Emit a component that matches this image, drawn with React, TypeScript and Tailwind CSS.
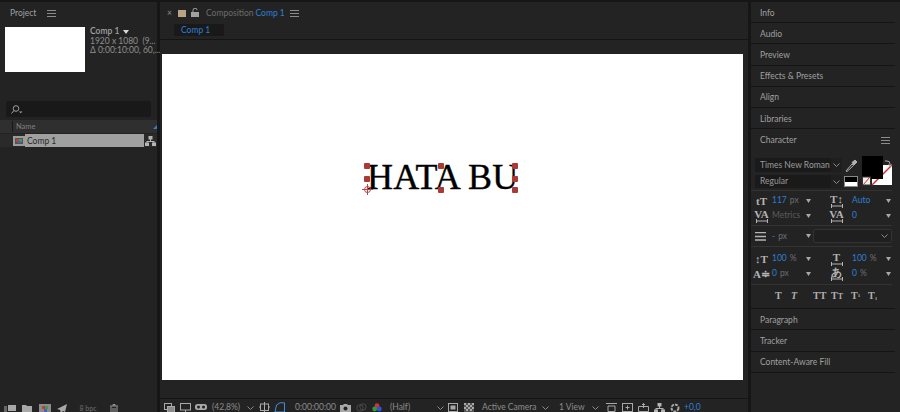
import type { ReactNode } from "react";

const ui = "font-['Lato','Liberation_Sans',sans-serif]";

function Burger({ className = "" }: { className?: string }) {
  return (
    <svg width="9" height="7" viewBox="0 0 9 7" className={className}>
      <path d="M0 .5h9M0 3.5h9M0 6.5h9" stroke="#8c8c8c" strokeWidth="1" />
    </svg>
  );
}

function Chevron({ className = "" }: { className?: string }) {
  return (
    <svg width="7" height="4" viewBox="0 0 7 4" className={className}>
      <path d="M.5.5 3.5 3.5 6.5.5" stroke="#8a8a8a" fill="none" strokeWidth="1" />
    </svg>
  );
}

function Caret() {
  return (
    <svg width="5" height="4" viewBox="0 0 5 4">
      <path d="M0 0h5L2.5 4z" fill="#a8a8a8" />
    </svg>
  );
}

function Tree() {
  return (
    <svg width="11" height="10" viewBox="0 0 11 10" fill="#b4b4b4">
      <rect x="3.5" y="0" width="4" height="3.5" />
      <rect x="0" y="6.5" width="4" height="3.5" />
      <rect x="7" y="6.5" width="4" height="3.5" />
      <path d="M5 3h1v2h3.5v2h-1V6h-6v1h-1V5H5z" />
    </svg>
  );
}

function Handle({ className }: { className: string }) {
  return <span className={`absolute h-[6px] w-[6px] rounded-[1px] bg-[#a93a3a] ${className}`} />;
}

function DockRow({ label }: { label: string }) {
  return (
    <div className="flex h-[21.2px] items-center border-b border-[#141414] pl-[9px] pt-[2px] text-[8.5px] text-[#a0a0a0]">
      <span>{label}</span>
    </div>
  );
}

function Value({ blue, unit, dim }: { blue?: string; unit?: string; dim?: string }) {
  return (
    <span className="flex items-center gap-[3px] text-[8.5px] leading-none">
      {blue && <span className="text-[#2d7fd3]">{blue}</span>}
      {dim && <span className="text-[#5c5c5c]">{dim}</span>}
      {unit && <span className="text-[#6e6e6e]">{unit}</span>}
    </span>
  );
}

function Glyph({ children, arrows }: { children: ReactNode; arrows?: "under" }) {
  return (
    <span className="flex h-[14px] w-[13px] flex-col items-center justify-center font-['Liberation_Serif',serif] text-[11px] font-bold leading-[10px] text-[#b4b4b4]">
      <span className="whitespace-nowrap">{children}</span>
      {arrows === "under" && (
        <svg width="12" height="4" viewBox="0 0 12 4" fill="none" stroke="#b4b4b4">
          <path d="M.5 0v4M11.500 0v4M0 2h12" />
        </svg>
      )}
    </span>
  );
}

function MetricRow({
  leftIcon,
  left,
  rightIcon,
  right,
  className = "",
}: {
  leftIcon: ReactNode;
  left: ReactNode;
  rightIcon: ReactNode;
  right: ReactNode;
  className?: string;
}) {
  return (
    <div className={`flex h-[15px] items-center pl-[4px] ${className}`}>
      <span className="w-[17px]">{leftIcon}</span>
      <span className="w-[34px]">{left}</span>
      <Caret />
      <span className="ml-[19px] w-[22px]">{rightIcon}</span>
      <span className="w-[34px]">{right}</span>
      <Caret />
    </div>
  );
}

function FootIcon({ children, w = 16 }: { children: ReactNode; w?: number }) {
  return (
    <span className="flex h-[13px] shrink-0 items-center justify-center" style={{ width: w }}>
      {children}
    </span>
  );
}

function ProjectPanel() {
  return (
    <aside className="flex w-[157px] shrink-0 flex-col bg-[#232323]">
      <div className="flex h-[21px] items-center gap-[11px] pl-[10px] pt-[2px] text-[8.5px] text-[#a0a0a0]">
        <span>Project</span>
        <Burger />
      </div>
      <div className="flex gap-[5px] pl-[5px] pt-[4px]">
        <div className="h-[45px] w-[80px] shrink-0 bg-white" />
        <div className="flex flex-col text-[8.5px] leading-[9.5px] text-[#8f8f8f]">
          <span className="flex items-center gap-[4px] font-semibold text-[#a3a3a3]">
            Comp 1
            <svg width="6" height="4" viewBox="0 0 6 4">
              <path d="M0 0h6L3 4z" fill="#d8d8d8" />
            </svg>
          </span>
          <span className="whitespace-nowrap">1920 x 1080 &nbsp;(9...</span>
          <span className="whitespace-nowrap">Δ 0:00:10:00, 60,...</span>
        </div>
      </div>
      <div className="mx-[6px] mt-[29px] flex h-[16px] items-center rounded-[2px] bg-[#191919] pl-[5px]">
        <svg width="12" height="9" viewBox="0 0 12 9" fill="none" stroke="#a0a0a0">
          <circle cx="5" cy="3.5" r="2.8" />
          <path d="M3 5.5.5 8.5" />
          <path d="M8 6.5h3.5L9.7 8.2z" fill="#a0a0a0" stroke="none" />
        </svg>
      </div>
      <div className="mt-[3px] flex h-[13px] items-center justify-between bg-[#2f2f2f] pl-[12px] text-[7.5px] text-[#808080]">
        <span className="border-l border-[#181818] pl-[3px]">Name</span>
        <svg width="4" height="4" viewBox="0 0 4 4">
          <path d="M4 0v4H0z" fill="#2d7fd3" />
        </svg>
      </div>
      <div className="mt-[1px] flex h-[13px] items-center bg-[#2a2a2a] pl-[13px]">
        <svg width="12" height="10" viewBox="0 0 12 10">
          <rect width="12" height="10" fill="#9b9b9b" />
          <rect x="2" y="2" width="8" height="6" fill="#555" />
          <rect x="3" y="3" width="3" height="3" fill="#c23c3c" />
          <rect x="6" y="3" width="3" height="3" fill="#3f9a4a" />
          <rect x="5" y="5" width="3" height="2" fill="#3d66c4" />
        </svg>
        <span className="flex h-[13px] w-[119px] items-center bg-[#a0a0a0] pl-[2px] pt-[1px] text-[8.5px] text-[#2a2a2a]">Comp 1</span>
        <span className="ml-[1px] flex w-[11px] items-center justify-center">
          <Tree />
        </span>
      </div>
      <div className="flex-1" />
      <div className="flex h-[10px] items-start overflow-hidden pl-[4px] text-[7px] text-[#6f6f6f]">
        <FootIcon w={12}>
          <svg width="12" height="8" viewBox="0 0 12 8">
            <rect x="4" y="0" width="8" height="6" fill="#a8a8a8" />
            <path d="M0 2h3M0 4h3M0 6h3" stroke="#a8a8a8" />
          </svg>
        </FootIcon>
        <span className="w-[6px]" />
        <FootIcon w={10}>
          <svg width="10" height="9" viewBox="0 0 10 9">
            <path d="M0 1h4l1 1h5v7H0z" fill="#a8a8a8" />
          </svg>
        </FootIcon>
        <span className="w-[7px]" />
        <FootIcon w={12}>
          <svg width="12" height="9" viewBox="0 0 12 9">
            <rect width="12" height="9" fill="#8c8c8c" />
            <rect x="3" y="2" width="3" height="3" fill="#c23c3c" />
            <rect x="6" y="2" width="3" height="3" fill="#3f9a4a" />
            <rect x="5" y="5" width="3" height="3" fill="#3d66c4" />
          </svg>
        </FootIcon>
        <span className="w-[6px]" />
        <FootIcon w={10}>
          <svg width="10" height="9" viewBox="0 0 10 9">
            <path d="M10 0 0 5l3 1 1 3 2-2 2 1z" fill="#a8a8a8" />
          </svg>
        </FootIcon>
        <span className="ml-[13px] flex w-[16px] justify-center whitespace-nowrap leading-[13px]">8 bpc</span>
        <span className="w-[14px]" />
        <FootIcon w={8}>
          <svg width="8" height="10" viewBox="0 0 8 10" fill="none" stroke="#9a9a9a">
            <path d="M0 2h8M3 2V.5h2V2M1 2.5v7h6v-7M3 4v4M5 4v4" />
          </svg>
        </FootIcon>
      </div>
    </aside>
  );
}

function CompFooter() {
  return (
    <footer className="flex h-[14px] items-center overflow-hidden border-t border-[#141414] pl-[1px] pt-[4px] text-[8.5px] text-[#8c8c8c]">
      <FootIcon>
        <svg width="11" height="10" viewBox="0 0 11 10" fill="none" stroke="#a8a8a8">
          <rect x=".5" y=".5" width="7" height="6" />
          <rect x="3.5" y="3.5" width="7" height="6" fill="#8c8c8c" />
        </svg>
      </FootIcon>
      <FootIcon>
        <svg width="11" height="10" viewBox="0 0 11 10" fill="none" stroke="#a8a8a8">
          <rect x=".5" y=".5" width="10" height="6.5" />
          <path d="M3 9.5h5M5.5 7v2" />
        </svg>
      </FootIcon>
      <FootIcon>
        <svg width="12" height="9" viewBox="0 0 12 9">
          <rect y="1" width="12" height="6" rx="2.5" fill="#a8a8a8" />
          <circle cx="3.5" cy="4" r="1.5" fill="#232323" />
          <circle cx="8.5" cy="4" r="1.5" fill="#232323" />
        </svg>
      </FootIcon>
      <span className="ml-[3px] w-[34px] shrink-0 whitespace-nowrap">(42,8%)</span>
      <Chevron className="ml-[1px] shrink-0" />
      <span className="w-[2px] shrink-0" />
      <FootIcon>
        <svg width="11" height="11" viewBox="0 0 11 11" fill="none" stroke="#a8a8a8">
          <rect x="1.5" y="2" width="8" height="6.5" />
          <path d="M5.5 0v11M0 5h1.5M9.5 5H11" />
        </svg>
      </FootIcon>
      <FootIcon>
        <svg width="12" height="11" viewBox="0 0 12 11" fill="none" stroke="#3f8fe0">
          <path d="M1 10 2.5 3 6 .8h4.5V10z" />
        </svg>
      </FootIcon>
      <span className="ml-[7px] w-[42px] shrink-0 whitespace-nowrap">0:00:00:00</span>
      <FootIcon>
        <svg width="11" height="8" viewBox="0 0 11 8">
          <path d="M0 1h3l1-1h3l1 1h3v7H0z" fill="#a8a8a8" />
          <circle cx="5.5" cy="4.5" r="2" fill="#232323" />
        </svg>
      </FootIcon>
      <FootIcon>
        <svg width="11" height="9" viewBox="0 0 11 9" fill="none" stroke="#4a4a4a">
          <circle cx="4" cy="5" r="3.2" />
          <circle cx="7" cy="4" r="3.2" />
        </svg>
      </FootIcon>
      <FootIcon>
        <svg width="10" height="10" viewBox="0 0 10 10">
          <circle cx="5" cy="2.6" r="2.4" fill="#d03333" />
          <circle cx="2.7" cy="6" r="2.4" fill="#2e9b3e" />
          <circle cx="7.3" cy="6" r="2.4" fill="#2f55d4" />
        </svg>
      </FootIcon>
      <span className="ml-[5px] w-[44px] shrink-0 whitespace-nowrap">(Half)</span>
      <Chevron className="ml-[3px] shrink-0" />
      <span className="w-[1px] shrink-0" />
      <FootIcon>
        <svg width="10" height="9" viewBox="0 0 10 9" fill="none" stroke="#a8a8a8">
          <rect x=".5" y=".5" width="9" height="8" />
          <rect x="2.5" y="2.5" width="5" height="4" fill="#a8a8a8" stroke="none" />
        </svg>
      </FootIcon>
      <FootIcon>
        <svg width="10" height="9" viewBox="0 0 10 9">
          <rect width="10" height="9" fill="#555" />
          <path d="M0 0h2v2H0zM4 0h2v2H4zM8 0h2v2H8zM2 2h2v2H2zM6 2h2v2H6zM0 4h2v2H0zM4 4h2v2H4zM8 4h2v2H8zM2 6h2v2H2zM6 6h2v2H6z" fill="#aaa" />
        </svg>
      </FootIcon>
      <span className="ml-[5px] w-[57px] shrink-0 whitespace-nowrap">Active Camera</span>
      <Chevron className="ml-[3px] shrink-0" />
      <span className="ml-[10px] w-[30px] shrink-0 whitespace-nowrap">1 View</span>
      <Chevron className="ml-[3px] shrink-0" />
      <span className="w-[4px] shrink-0" />
      <FootIcon>
        <svg width="11" height="9" viewBox="0 0 11 9" fill="none" stroke="#a8a8a8">
          <path d="M0 .5h11M2 3h7v5.5H2z" />
        </svg>
      </FootIcon>
      <FootIcon>
        <svg width="11" height="10" viewBox="0 0 11 10" fill="none" stroke="#a8a8a8">
          <rect x=".5" y=".5" width="10" height="8" />
          <path d="M5.5 2.5v4M3.5 4.500h4" />
        </svg>
      </FootIcon>
      <FootIcon>
        <svg width="11" height="9" viewBox="0 0 11 9" fill="none" stroke="#a8a8a8">
          <path d="M.5 3.5h10v5H.5zM5.5 5V.5M4 2l1.500-1.500L7 2" />
        </svg>
      </FootIcon>
      <FootIcon>
        <Tree />
      </FootIcon>
      <FootIcon>
        <svg width="10" height="10" viewBox="0 0 10 10" fill="none" stroke="#a8a8a8" strokeWidth="2">
          <circle cx="5" cy="5" r="3.5" strokeDasharray="3 1" />
        </svg>
      </FootIcon>
      <span className="ml-[1px] whitespace-nowrap text-[#2d7fd3]">+0,0</span>
    </footer>
  );
}

function CompPanel() {
  return (
    <main className="flex w-[588px] shrink-0 flex-col bg-[#232323]">
      <div className="flex h-[22px] items-center pl-[7px] pt-[1px] text-[8.5px]">
        <span className="w-[11px] text-[#8a8a8a]">×</span>
        <span className="h-[7px] w-[8px] bg-[#b8a384]" />
        <svg width="8" height="9" viewBox="0 0 8 9" className="mb-[3px] ml-[5px]">
          <path d="M2 4V2.200a2 2 0 0 1 4 0" fill="none" stroke="#a0a0a0" />
          <rect y="4" width="8" height="5" fill="#a0a0a0" />
        </svg>
        <span className="ml-[7px] text-[#6d6d6d]">Composition</span>
        <span className="ml-[2px] text-[#2d7fd3]">Comp 1</span>
        <Burger className="ml-[5px]" />
      </div>
      <div className="flex h-[16px] items-start border-b border-[#141414] pl-[14px]">
        <span className="flex h-[12px] w-[50px] items-center rounded-[1px] bg-[#191919] pl-[7px] text-[8.5px] text-[#2d7fd3]">Comp 1</span>
      </div>
      <div className="flex flex-1 items-start pl-[2px] pt-[14px]">
        <div className="relative h-[326px] w-[581px] bg-white">
          <div className="absolute left-[205px] top-[109px] h-[30px] w-[150px] whitespace-nowrap font-['Liberation_Serif',serif] text-[36px] leading-[28px] tracking-[0.2px] text-black [-webkit-text-stroke:0.4px_black]">
            HATA BU
            <Handle className="left-[-3px] top-0" />
            <Handle className="left-[-3px] top-[13px]" />
            <Handle className="left-[71px] top-0" />
            <Handle className="left-[71px] top-[24px]" />
            <Handle className="left-[145px] top-0" />
            <Handle className="left-[145px] top-[13px]" />
            <Handle className="left-[145px] top-[24px]" />
            <svg width="11" height="11" viewBox="0 0 11 11" fill="none" stroke="#b5484c" className="absolute left-[-5px] top-[21px]">
              <circle cx="5.5" cy="5.5" r="3" />
              <path d="M5.5 0v11M0 5.5h11" />
            </svg>
          </div>
        </div>
      </div>
      <CompFooter />
    </main>
  );
}

function CharacterPanel() {
  return (
    <section className="border-b border-[#141414] pr-[3px]">
      <div className="flex h-[22px] items-center justify-between pl-[9px] pt-[1px] text-[8.5px] text-[#a0a0a0]">
        <span>Character</span>
        <Burger className="mr-[2px]" />
      </div>
      <div className="relative flex h-[37px] flex-col gap-[3px] pl-[4px] pt-[7px] text-[8.5px] text-[#9a9a9a]">
        <div className="flex h-[14px] items-center">
          <span className="flex h-[14px] w-[76px] items-center whitespace-nowrap bg-[#1a1a1a] pl-[5px]">Times New Roman</span>
          <span className="flex h-[14px] w-[11px] items-center justify-center bg-[#1f1f1f]">
            <Chevron />
          </span>
          <svg width="12" height="13" viewBox="0 0 12 13" fill="none" stroke="#b0b0b0" className="ml-[3px]">
            <path d="M1 12 7 5l1.500 1.500L2 12.500z" />
            <path d="M7 3.500 10 1l2 2-3 3z" fill="#b0b0b0" />
          </svg>
        </div>
        <div className="flex h-[13px] items-center">
          <span className="flex h-[13px] w-[76px] items-center bg-[#1a1a1a] pl-[5px]">Regular</span>
          <span className="flex h-[13px] w-[11px] items-center justify-center bg-[#1f1f1f]">
            <Chevron />
          </span>
          <span className="ml-[2px] flex h-[11px] w-[14px] flex-col border border-[#888]">
            <span className="h-1/2 bg-black" />
            <span className="h-1/2 bg-white" />
          </span>
        </div>
        <svg width="31" height="31" viewBox="0 0 31 31" className="absolute left-[111px] top-[5px]">
          <rect x="10" y="9" width="20" height="20" fill="#fff" />
          <path d="M10 29 30 9" stroke="#d92a2a" strokeWidth="1.5" />
          <rect x="0" y="0" width="21" height="23" fill="#000" />
          <path d="M23 5h2a3 3 0 0 1 3 3v2M26.500 8.500 28 10.500 29.500 8.500" stroke="#b0b0b0" fill="none" />
          <rect x="0.500" y="21" width="8" height="8" fill="#eee" stroke="#333" />
          <path d="M1 29 8 21" stroke="#d92a2a" />
        </svg>
      </div>
      <div className="mt-[2px] border-t border-[#333] pt-[1px]">
        <MetricRow
          className="mt-[1px]"
          leftIcon={<Glyph>tT</Glyph>}
          left={<Value blue="117" unit="px" />}
          rightIcon={<Glyph arrows="under">T↕</Glyph>}
          right={<Value blue="Auto" />}
        />
        <MetricRow
          leftIcon={<Glyph arrows="under">VA</Glyph>}
          left={<Value dim="Metrics" />}
          rightIcon={<Glyph arrows="under">VA</Glyph>}
          right={<Value blue="0" />}
        />
      </div>
      <div className="mt-[2px] flex h-[21px] items-center border-t border-[#333] pl-[4px]">
        <svg width="11" height="9" viewBox="0 0 11 9">
          <path d="M0 .5h11M0 4.500h11M0 8h11" stroke="#b4b4b4" strokeWidth="1.500" />
        </svg>
        <span className="ml-[6px] w-[34px]">
          <Value blue="-" unit="px" />
        </span>
        <Caret />
        <span className="ml-[2px] flex h-[14px] flex-1 items-center justify-end rounded-[2px] border border-[#333] bg-[#1f1f1f] pr-[3px]">
          <Chevron />
        </span>
      </div>
      <div className="border-t border-[#333] pt-[3px]">
        <MetricRow
          className="mt-[1px]"
          leftIcon={<Glyph>↕T</Glyph>}
          left={<Value blue="100" unit="%" />}
          rightIcon={<Glyph arrows="under">T</Glyph>}
          right={<Value blue="100" unit="%" />}
        />
        <MetricRow
          leftIcon={<Glyph>A≑</Glyph>}
          left={<Value blue="0" unit="px" />}
          rightIcon={<Glyph arrows="under">あ</Glyph>}
          right={<Value blue="0" unit="%" />}
        />
      </div>
      <div className="mt-[3px] flex h-[24px] items-center border-t border-[#333] pb-[2px] pl-[24px] font-['Liberation_Serif',serif] text-[10px] font-bold text-[#b0b0b0]">
        <span className="w-[16px]">T</span>
        <span className="w-[22px] italic">T</span>
        <span className="w-[18px]">TT</span>
        <span className="w-[20px]">
          T<span className="text-[8px]">T</span>
        </span>
        <span className="w-[17px]">
          T<sup className="text-[5px]">1</sup>
        </span>
        <span>
          T<sub className="text-[5px]">1</sub>
        </span>
      </div>
    </section>
  );
}

export default function App() {
  return (
    <div className={`flex h-[412px] w-[900px] gap-[3px] overflow-hidden bg-[#161616] pt-[2px] ${ui}`}>
      <ProjectPanel />
      <CompPanel />
      <aside className="flex min-w-0 flex-1 flex-col bg-[#232323] pr-[5px]">
        <DockRow label="Info" />
        <DockRow label="Audio" />
        <DockRow label="Preview" />
        <DockRow label="Effects & Presets" />
        <DockRow label="Align" />
        <DockRow label="Libraries" />
        <CharacterPanel />
        <DockRow label="Paragraph" />
        <DockRow label="Tracker" />
        <DockRow label="Content-Aware Fill" />
      </aside>
    </div>
  );
}
